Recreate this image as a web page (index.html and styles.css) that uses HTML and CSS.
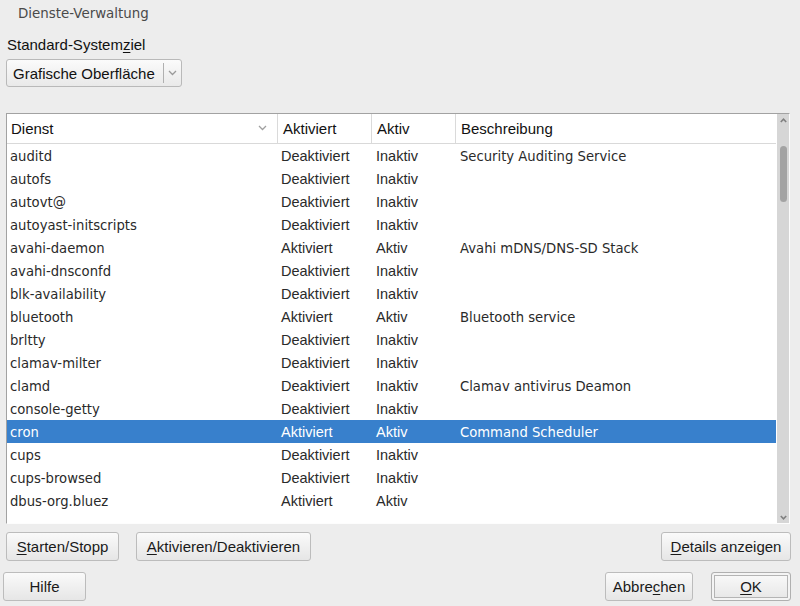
FILE: index.html
```html
<!DOCTYPE html>
<html lang="de">
<head>
<meta charset="utf-8">
<title>Dienste-Verwaltung</title>
<link rel="stylesheet" href="styles.css">
</head>
<body>
<div class="dialog">
  <div class="title">Dienste-Verwaltung</div>
  <div class="label">Standard-System<u>z</u>iel</div>
  <div class="combo">
    <span class="combo-text">Grafische Oberfläche</span>
    <span class="combo-sep"></span>
    <svg class="combo-arrow" width="9" height="6" viewBox="0 0 9 6"><path d="M1 1 L4.5 4.5 L8 1" fill="none" stroke="#9a9a9a" stroke-width="1.3"/></svg>
  </div>

  <div class="frame">
    <div class="list">
      <div class="header">
        <div class="hcell first">Dienst
          <svg class="sort" width="9" height="6" viewBox="0 0 9 6"><path d="M1 1 L4.5 4.5 L8 1" fill="none" stroke="#a0a0a0" stroke-width="1.3"/></svg>
        </div>
        <div class="hcell">Aktiviert</div>
        <div class="hcell">Aktiv</div>
        <div class="hcell">Beschreibung</div>
      </div>
      <div class="rows">
        <div class="row"><span class="c1">auditd</span><span class="c2">Deaktiviert</span><span class="c3">Inaktiv</span><span class="c4">Security Auditing Service</span></div>
        <div class="row"><span class="c1">autofs</span><span class="c2">Deaktiviert</span><span class="c3">Inaktiv</span><span class="c4"></span></div>
        <div class="row"><span class="c1">autovt@</span><span class="c2">Deaktiviert</span><span class="c3">Inaktiv</span><span class="c4"></span></div>
        <div class="row"><span class="c1">autoyast-initscripts</span><span class="c2">Deaktiviert</span><span class="c3">Inaktiv</span><span class="c4"></span></div>
        <div class="row"><span class="c1">avahi-daemon</span><span class="c2">Aktiviert</span><span class="c3">Aktiv</span><span class="c4">Avahi mDNS/DNS-SD Stack</span></div>
        <div class="row"><span class="c1">avahi-dnsconfd</span><span class="c2">Deaktiviert</span><span class="c3">Inaktiv</span><span class="c4"></span></div>
        <div class="row"><span class="c1">blk-availability</span><span class="c2">Deaktiviert</span><span class="c3">Inaktiv</span><span class="c4"></span></div>
        <div class="row"><span class="c1">bluetooth</span><span class="c2">Aktiviert</span><span class="c3">Aktiv</span><span class="c4">Bluetooth service</span></div>
        <div class="row"><span class="c1">brltty</span><span class="c2">Deaktiviert</span><span class="c3">Inaktiv</span><span class="c4"></span></div>
        <div class="row"><span class="c1">clamav-milter</span><span class="c2">Deaktiviert</span><span class="c3">Inaktiv</span><span class="c4"></span></div>
        <div class="row"><span class="c1">clamd</span><span class="c2">Deaktiviert</span><span class="c3">Inaktiv</span><span class="c4">Clamav antivirus Deamon</span></div>
        <div class="row"><span class="c1">console-getty</span><span class="c2">Deaktiviert</span><span class="c3">Inaktiv</span><span class="c4"></span></div>
        <div class="row selected"><span class="c1">cron</span><span class="c2">Aktiviert</span><span class="c3">Aktiv</span><span class="c4">Command Scheduler</span></div>
        <div class="row"><span class="c1">cups</span><span class="c2">Deaktiviert</span><span class="c3">Inaktiv</span><span class="c4"></span></div>
        <div class="row"><span class="c1">cups-browsed</span><span class="c2">Deaktiviert</span><span class="c3">Inaktiv</span><span class="c4"></span></div>
        <div class="row"><span class="c1">dbus-org.bluez</span><span class="c2">Aktiviert</span><span class="c3">Aktiv</span><span class="c4"></span></div>
      </div>
    </div>
    <div class="scrollbar">
      <svg class="sarrow" width="7" height="5" viewBox="0 0 7 5"><path d="M0.8 4 L3.5 1.2 L6.2 4" fill="none" stroke="#808080" stroke-width="1.6"/></svg>
      <div class="track"><div class="thumb"></div></div>
      <svg class="sarrow" width="7" height="5" viewBox="0 0 7 5"><path d="M0.8 1 L3.5 3.8 L6.2 1" fill="none" stroke="#808080" stroke-width="1.6"/></svg>
    </div>
  </div>

  <div class="btnrow one">
    <button class="btn w-start"><u>S</u>tarten/Stopp</button>
    <button class="btn w-akt"><u>A</u>ktivieren/Deaktivieren</button>
    <span class="spacer"></span>
    <button class="btn w-det"><u>D</u>etails anzeigen</button>
  </div>
  <div class="btnrow two">
    <button class="btn w-help">Hilfe</button>
    <span class="spacer"></span>
    <button class="btn w-cancel">Abbre<u>c</u>hen</button>
    <button class="btn w-ok default"><u>O</u>K</button>
  </div>
</div>
</body>
</html>
```

FILE: styles.css
```css
* { box-sizing: border-box; }
html, body {
  margin: 0;
  padding: 0;
  background: #ededed;
  width: 800px;
  height: 606px;
  overflow: hidden;
}
body {
  font-family: "Liberation Sans", Arial, sans-serif;
  font-size: 15px;
  color: #1a1a1a;
}
.dialog {
  display: flex;
  flex-direction: column;
  height: 606px;
}
.title {
  font-family: "DejaVu Sans", sans-serif;
  font-size: 13.4px;
  line-height: 16px;
  color: #4a4a4a;
  margin: 6px 0 0 18px;
}
.label {
  line-height: 17px;
  margin: 14px 0 0 7px;
  color: #111;
}
u { text-decoration: underline; text-underline-offset: 2px; }

.combo {
  margin: 6px 0 0 6px;
  width: 176px;
  height: 28px;
  border: 1px solid #b9b9b9;
  border-radius: 3px;
  background: linear-gradient(#fbfbfb, #e9e9e9);
  display: flex;
  align-items: center;
  padding-left: 6px;
}
.combo-text { color: #111; }
.combo-sep {
  width: 1px;
  height: 20px;
  background: #b0b0b0;
  margin-left: 8px;
}
.combo-arrow { margin-left: 4px; }

.frame {
  margin: 26px 0 0 6px;
  width: 784px;
  height: 411px;
  border: 1px solid #a2a2a2;
  border-right-color: #fdfdfd;
  border-bottom-color: #fdfdfd;
  background: #fff;
  display: flex;
}
.list {
  width: 769px;
  display: flex;
  flex-direction: column;
}
.header, .row {
  display: grid;
  grid-template-columns: 270px 94px 84px 1fr;
}
.header {
  height: 30px;
  border-bottom: 1px solid #d9d9d9;
}
.hcell {
  display: flex;
  align-items: center;
  padding-left: 5px;
  border-left: 1px solid #dadada;
  color: #111;
}
.hcell.first {
  border-left: none;
  padding-left: 4px;
  position: relative;
}
.sort {
  position: absolute;
  right: 10px;
  top: 11px;
}
.row {
  height: 23px;
  align-items: center;
  color: #2a2a2a;
  font-size: 14.5px;
}
.row span { padding-left: 3px; white-space: nowrap; padding-top: 1px; }
.row .c1, .row .c4 {
  font-family: "DejaVu Sans", sans-serif;
  font-size: 13.2px;
}
.row .c2 { padding-left: 4px; }
.row .c3 { padding-left: 5px; }
.row .c4 { padding-left: 5px; }
.row.selected {
  background: #3880cc;
  color: #fff;
}
.scrollbar {
  width: 12px;
  margin-left: 1px;
  background: #d6d6d6;
  display: flex;
  flex-direction: column;
  align-items: center;
  padding: 4px 0 3px;
}
.sarrow { flex: none; }
.track {
  flex: 1;
  width: 100%;
  display: flex;
  justify-content: center;
  padding-top: 23px;
}
.thumb {
  width: 7px;
  height: 56px;
  border-radius: 4px;
  background: #a3a3a3;
}

.btnrow {
  display: flex;
  align-items: center;
}
.btnrow.one { margin: 8px 0 0 6px; width: 785px; gap: 17px; }
.btnrow.two { margin: 11px 0 0 3px; width: 788px; gap: 18px; }
.spacer { flex: 1; }
.btn {
  font-family: "Liberation Sans", Arial, sans-serif;
  font-size: 15px;
  color: #1a1a1a;
  height: 29px;
  padding: 0;
  border: 1px solid #bcbcbc;
  border-radius: 3px;
  background: linear-gradient(#fafafa, #e6e6e6);
}
.w-start { width: 113px; }
.w-akt { width: 175px; }
.w-det { width: 130px; }
.w-help { width: 83px; }
.w-cancel { width: 88px; }
.w-ok { width: 80px; }
.btn.default {
  border-color: #b0b0b0;
  box-shadow: inset 0 0 0 2px #f4f4f4, inset 0 0 0 3px #b4b4b4;
}
```
